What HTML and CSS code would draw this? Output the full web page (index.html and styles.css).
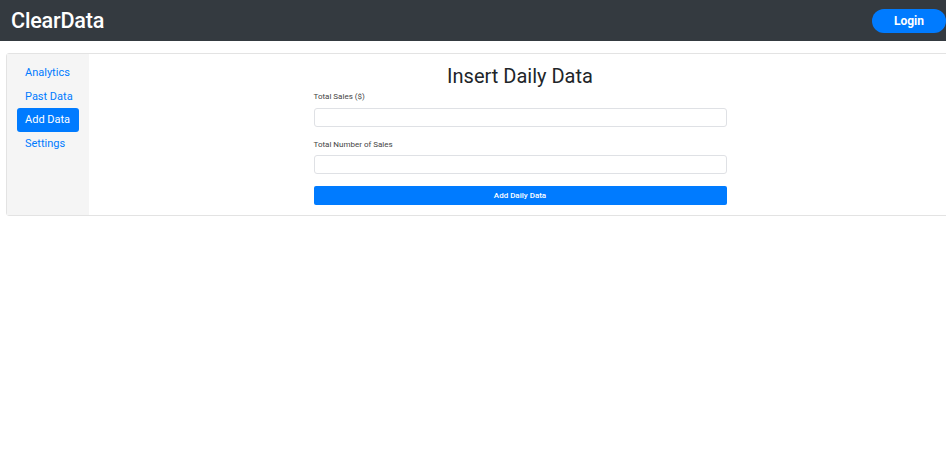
FILE: index.html
```html
<!DOCTYPE html>
<html lang="en">
<head>
<meta charset="utf-8">
<title>ClearData</title>
<link rel="stylesheet" href="styles.css">
</head>
<body>
<header class="topbar">
  <div class="brand">ClearData</div>
  <button class="login">Login</button>
</header>
<div class="page">
  <div class="card">
    <nav class="sidebar">
      <a class="nav-link">Analytics</a>
      <a class="nav-link">Past Data</a>
      <a class="nav-link active">Add Data</a>
      <a class="nav-link">Settings</a>
    </nav>
    <main class="main">
      <h1 class="title">Insert Daily Data</h1>
      <form class="form">
        <label class="label">Total Sales ($)</label>
        <input class="input" type="text">
        <label class="label second">Total Number of Sales</label>
        <input class="input" type="text">
        <button type="button" class="submit">Add Daily Data</button>
      </form>
    </main>
  </div>
</div>
</body>
</html>
```
FILE: styles.css
```css
html, body {
  margin: 0;
  padding: 0;
  overflow: hidden;
  background: #fff;
  font-family: Roboto, "Liberation Sans", sans-serif;
}
.topbar {
  height: 41px;
  background: #343a40;
  display: flex;
  align-items: center;
  justify-content: space-between;
  padding-left: 11px;
  box-sizing: border-box;
  width: 946px;
}
.brand {
  color: #fff;
  font-size: 21.6px;
  font-weight: 500;
  letter-spacing: -0.2px;
}
.login {
  width: 74px;
  height: 24px;
  border: none;
  border-radius: 12px;
  background: #007bff;
  color: #fff;
  font-family: Roboto, "Liberation Sans", sans-serif;
  font-size: 12px;
  font-weight: 700;
  padding: 0;
}
.page {
  padding: 12px 0 0 6px;
}
.card {
  width: 946px;
  border: 1px solid #e3e3e3;
  border-radius: 3px;
  display: flex;
  box-sizing: border-box;
}
.sidebar {
  flex: 0 0 82px;
  width: 82px;
  background: #f5f5f5;
  padding: 7px 10px 0 10px;
  box-sizing: border-box;
  display: flex;
  flex-direction: column;
}
.nav-link {
  display: block;
  white-space: nowrap;
  height: 23.5px;
  line-height: 23.5px;
  padding: 0 8px;
  font-size: 11px;
  color: #007bff;
  border-radius: 3px;
}
.nav-link.active {
  background: #007bff;
  color: #fff;
}
.main {
  flex: 1;
  padding: 9px 0 10px;
}
.title {
  margin: 0;
  text-align: center;
  font-size: 20px;
  font-weight: 400;
  line-height: 26px;
  color: #212529;
}
.form {
  width: 413px;
  margin: 0 auto;
  display: flex;
  flex-direction: column;
}
.label {
  margin-top: 3px;
  font-size: 8px;
  line-height: 10px;
  color: #444;
  margin-bottom: 6px;
}
.label.second {
  margin-top: 13px;
  margin-bottom: 5px;
}
.input {
  height: 19px;
  border: 1px solid #dfe1e5;
  border-radius: 3px;
  box-sizing: border-box;
  padding: 0 6px;
  margin: 0;
}
.submit {
  margin-top: 12px;
  height: 19px;
  border: none;
  border-radius: 2px;
  background: #007bff;
  color: #fff;
  font-family: Roboto, "Liberation Sans", sans-serif;
  font-size: 8px;
  font-weight: 500;
  padding: 0;
}
```
